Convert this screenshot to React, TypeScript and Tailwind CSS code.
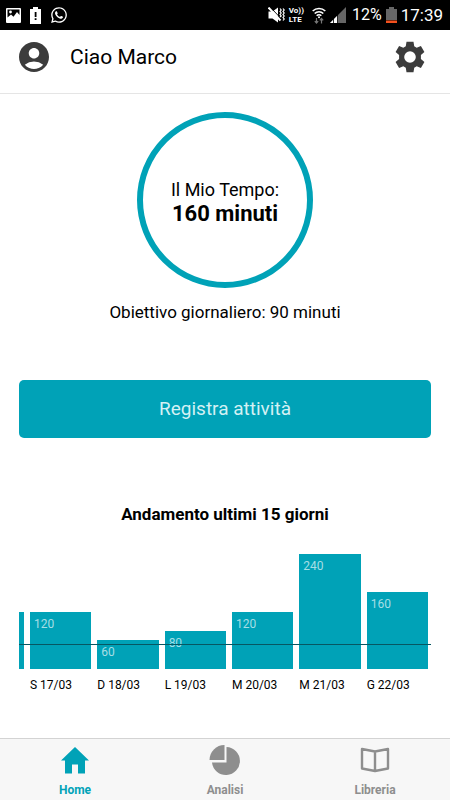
import type { ReactNode } from "react";
import { MdAccountCircle } from "react-icons/md";
import { FaWhatsapp } from "react-icons/fa";

interface Day {
  label: string;
  minutes: number;
}

const days: Day[] = [
  { label: "S 17/03", minutes: 120 },
  { label: "D 18/03", minutes: 60 },
  { label: "L 19/03", minutes: 80 },
  { label: "M 20/03", minutes: 120 },
  { label: "M 21/03", minutes: 240 },
  { label: "G 22/03", minutes: 160 },
];

const MAX_MINUTES = 240;

function StatusBar() {
  return (
    <div className="flex h-[30px] items-center justify-between bg-black pr-[7px] pl-[6px] text-white">
      <div className="flex items-center gap-[9px]">
        <svg width="15" height="15" viewBox="0 0 15 15" fill="white" aria-hidden="true">
          <path
            fillRule="evenodd"
            d="M1 0h13a1 1 0 0 1 1 1v13a1 1 0 0 1-1 1H1a1 1 0 0 1-1-1V1a1 1 0 0 1 1-1zM1.500 1.500v8L5 6.500l2.500 2.200L11 4l2.500 3V1.500z"
          />
          <circle cx="4.500" cy="4" r="1.400" />
        </svg>
        <svg width="11" height="17" viewBox="0 0 11 17" fill="white" aria-hidden="true">
          <path fillRule="evenodd" d="M3 0h5v2h3v15H0V2h3zM4.700 5v5h1.800V5zM4.700 11.200v1.800h1.800v-1.800z" />
        </svg>
        <FaWhatsapp size={18} />
      </div>
      <div className="flex items-center">
        <svg width="17" height="16" viewBox="0 0 17 16" fill="white" aria-hidden="true">
          <path d="M0.500 4.500h4L10 0.500v15L4.500 11.500h-4z" />
          <path d="M2 0l11 11.500" stroke="black" strokeWidth="1" />
          <path d="M0.500 0.500l12 13" stroke="white" strokeWidth="2" />
          <path
            d="M12 1.500l1.200 1.500L12 4.500l1.200 1.500L12 7.500l1.200 1.500L12 10M15 1.500l1.200 1.500L15 4.500l1.200 1.500L15 7.500l1.200 1.500L15 10.500l1.200 1.500L15 13.500"
            fill="none"
            stroke="white"
            strokeWidth="1.200"
          />
        </svg>
        <div className="ml-1 text-[8px] leading-[9px] font-bold">
          <div>Vo))</div>
          <div>LTE</div>
        </div>
        <svg className="ml-2" width="14" height="17" viewBox="0 0 14 17" fill="none" aria-hidden="true">
          <path d="M0.700 4a9 9 0 0 1 12.600 0M2.700 6.500a6 6 0 0 1 8.600 0M4.700 8.800a3.200 3.200 0 0 1 4.600 0" stroke="white" strokeWidth="1.600" />
          <circle cx="7" cy="10.300" r="1" fill="white" />
          <path d="M4.500 11v5M2.800 14.200l1.700 1.900 1.700-1.900M9.500 16.500v-5M7.800 13.400l1.700-1.900 1.700 1.900" stroke="#777" strokeWidth="1.200" />
        </svg>
        <svg className="ml-1" width="16" height="16" viewBox="0 0 16 16" aria-hidden="true">
          <path d="M16 0v16H0z" fill="#666" />
          <path d="M7.500 8.500V16H0z" fill="white" />
          <path d="M3.500 12v4M7.500 8v8" stroke="black" strokeWidth="0.800" />
        </svg>
        <span className="ml-[6px] text-[16px] leading-5">12%</span>
        <svg className="ml-1" width="11" height="16" viewBox="0 0 11 16" aria-hidden="true">
          <path d="M3 0h5v2h3v11H0V2h3z" fill="#666" />
          <path d="M0 13.500h11V16H0z" fill="#f4511e" />
        </svg>
        <span className="ml-1 text-[17px] leading-5">17:39</span>
      </div>
    </div>
  );
}

function Header() {
  return (
    <header className="flex h-16 items-center justify-between border-b border-[#e5e5e5] pr-6 pb-[10px] pl-4">
      <div className="flex items-center gap-[18px]">
        <MdAccountCircle size={36} className="text-[#3c3c3c]" />
        <h1 className="text-[21px] leading-7">Ciao Marco</h1>
      </div>
      <button type="button" aria-label="Impostazioni">
        <svg width="32" height="32" viewBox="1 1 22 22" fill="#3c3c3c" aria-hidden="true">
          <path
            fillRule="evenodd"
            d="M9.600 1.500h4.800l.5 3.100 1.700 1 2.900-1.100 2.400 4.100-2.400 2v2.800l2.400 2-2.400 4.100-2.900-1.100-1.700 1-.5 3.100H9.600l-.5-3.100-1.700-1-2.900 1.100-2.400-4.100 2.400-2v-2.800l-2.400-2 2.400-4.100 2.900 1.100 1.700-1zM12 8a4 4 0 1 0 0 8 4 4 0 0 0 0-8z"
          />
        </svg>
      </button>
    </header>
  );
}

function Chart() {
  return (
    <div className="relative mt-7">
      <div className="flex gap-[6px] pr-[3px]">
        {/* edge of the previous day */}
        <div className="flex h-[115px] flex-1 items-end">
          <div className="h-1/2 w-full bg-[#00a2b7]" />
        </div>
        {days.map((day) => (
          <div key={day.label} className="w-[15%] shrink-0">
            <div className="flex h-[115px] items-end">
              <div
                className="w-full bg-[#00a2b7] pt-[5px] pl-1 text-[12px] leading-[14px] text-[#a6dee5]"
                style={{ height: `${(day.minutes / MAX_MINUTES) * 100}%` }}
              >
                {day.minutes}
              </div>
            </div>
            <div className="mt-2 text-[12px] leading-4 whitespace-nowrap">{day.label}</div>
          </div>
        ))}
      </div>
      {/* daily goal */}
      <div className="absolute inset-x-0 top-[90px] h-px bg-[#075762]" />
    </div>
  );
}

function Tab({ label, active, children }: { label: string; active?: boolean; children: ReactNode }) {
  return (
    <a
      href="#"
      aria-current={active ? "page" : undefined}
      className={`flex flex-1 flex-col items-center gap-[6px] pt-[5px] text-[12px] leading-4 font-bold ${
        active ? "text-[#00a2b7]" : "text-[#8e8e8e]"
      }`}
    >
      {children}
      {label}
    </a>
  );
}

function TabBar() {
  return (
    <nav className="flex h-[62px] border-t border-[#d3d3d3] bg-[#f7f7f7]">
      <Tab label="Home" active>
        <svg width="32" height="32" viewBox="0 0 32 32" fill="currentColor" aria-hidden="true">
          <path d="M16 3L30 16.500h-4V29.500h-7V20.500h-6V29.500H6V16.500H2z" />
        </svg>
      </Tab>
      <Tab label="Analisi">
        <svg width="32" height="32" viewBox="0 0 32 32" fill="currentColor" aria-hidden="true">
          <path d="M15.500 1v15H0.500A15 15 0 0 1 15.500 1z" />
          <path d="M17.500 3A14 14 0 1 1 3 18.500h14.500z" />
        </svg>
      </Tab>
      <Tab label="Libreria">
        <svg width="32" height="32" viewBox="0 0 32 32" fill="none" stroke="currentColor" strokeWidth="2.400" strokeLinejoin="round" aria-hidden="true">
          <path d="M16 7.500L3 5v19.500l13 2.500 13-2.500V5zM16 7.500V27" />
        </svg>
      </Tab>
    </nav>
  );
}

export default function App() {
  return (
    <div className="flex min-h-screen flex-col bg-white font-['Roboto',sans-serif] text-black">
      <StatusBar />
      <Header />
      <main className="flex-1 px-[19px] pt-[18px]">
        <div className="mx-auto flex size-44 flex-col items-center justify-center rounded-full border-6 border-[#00a2b7] pt-1">
          <span className="text-[18px] leading-6">Il Mio Tempo:</span>
          <strong className="text-[22px] leading-6">160 minuti</strong>
        </div>
        <p className="mt-3 text-center text-[17px] leading-6">Obiettivo giornaliero: 90 minuti</p>
        <button
          type="button"
          className="mt-14 h-[58px] w-full rounded-[5px] bg-[#00a2b7] text-[19px] leading-6 text-[#d4f1f4]"
        >
          Registra attività
        </button>
        <h2 className="mt-16 text-center text-[17px] leading-6 font-bold">Andamento ultimi 15 giorni</h2>
        <Chart />
      </main>
      <TabBar />
    </div>
  );
}
